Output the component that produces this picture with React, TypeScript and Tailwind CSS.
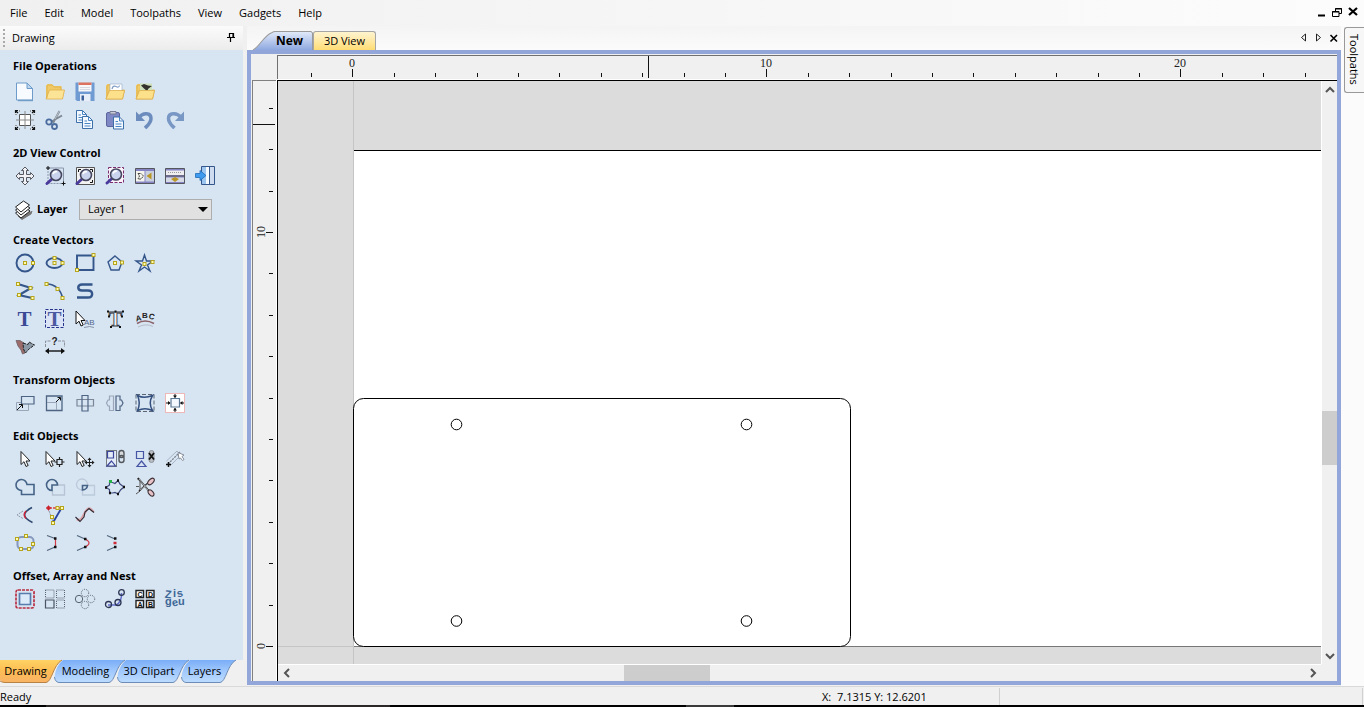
import type { ReactNode } from "react";

const navy = "#34568b";
const cursor = "M0 0V13L3 10.2L5 15L7.2 14L5 9.5H9Z";

function Node({ x, y }: { x: number; y: number }) {
  return <rect x={x - 1.5} y={y - 1.5} width="3" height="3" fill="#fffbb0" stroke="#b5a41c" strokeWidth="1" />;
}

function Lens({ x, y }: { x: number; y: number }) {
  return (
    <g>
      <path d={`M${x - 4} ${y + 4}L${x - 9} ${y + 8.5}`} stroke="#4a3a9c" strokeWidth="3" strokeLinecap="round" />
      <circle cx={x} cy={y} r="5.5" fill="#c9d3ee" stroke="#45475e" strokeWidth="1.6" />
      <path d={`M${x - 3} ${y - 1}A3.4 3.4 0 0 1 ${x + 1} ${y - 3.2}`} stroke="#fff" strokeWidth="1.6" fill="none" />
    </g>
  );
}

function Folder() {
  return (
    <g>
      <path d="M2 18V4.5L3.5 3H8L10 5H17.5V9H20.5L18.5 18Z" fill="#f0ca66" />
      <path d="M2 18L5.5 9H20.5L18.5 18Z" fill="#fce497" stroke="#e0b04c" strokeWidth=".8" />
      <path d="M3 17V5L4 4H8L10 6H17V9" fill="none" stroke="#dcae4a" strokeWidth=".8" />
    </g>
  );
}

function SmallDoc({ x, y }: { x: number; y: number }) {
  return (
    <g transform={`translate(${x} ${y})`}>
      <path d="M.5 .5H6.5L10.5 4.5V12.5H.5Z" fill="#f4f9ff" stroke="#3d6fa8" />
      <path d="M6.5 .5V4.5H10.5M2.5 5H5M2.5 7.5H8.5M2.5 10H8.5" fill="none" stroke="#4a86c5" />
    </g>
  );
}

type Tool = { name: string; art: ReactNode };

const fileTools: Tool[][] = [
  [
    { name: "New", art: <><path d="M2.5 2H13L18.5 7.5V19H2.5Z" fill="#f7fbff" stroke="#6d9cca" /><path d="M13 2V7.500H18.500Z" fill="#bcd7ee" stroke="#6d9cca" /><path d="M4 19.500H19" stroke="#6f9cc8" strokeWidth="1.400" /></> },
    { name: "Open", art: <Folder /> },
    { name: "Save", art: <><path d="M1.500 1.500H20.500V20H3L1.500 18.500Z" fill="#6f9ad2" /><path d="M4.500 1.500H17.500V10.500H4.500Z" fill="#f8f8fb" /><path d="M4.500 1.500H17.500V4H4.500Z" fill="#dd7260" /><path d="M6 6.500H16M6 8.500H16" stroke="#d5d9e2" /><path d="M6 13H16.500V20H6Z" fill="#e8eef7" /><path d="M7.500 14.500H10V19.500H7.500Z" fill="#3c5f99" /></> },
    { name: "Import vectors", art: <><Folder /><path d="M6 3H18V10L14 12H6Z" fill="#fff" stroke="#9fb2cc" strokeWidth=".7" /><path d="M8 8Q9 4 12 5.500Q15 7 15.500 4.500" fill="none" stroke="#7f9cc6" strokeWidth="1.200" /><path d="M2 18L5.500 9.500H20.500L18.500 18Z" fill="#fce08a" stroke="#e0b04c" strokeWidth=".8" /></> },
    { name: "Import bitmap", art: <><Folder /><path d="M6 2.500H18V10H6Z" fill="#cfe0bd" /><path d="M7 4.500L10 3L14 4.500L18 5L14.500 7.500L13 10L10 7.500Z" fill="#33322f" /><path d="M2 18L5.500 9.500H20.500L18.500 18Z" fill="#fce08a" stroke="#e0b04c" strokeWidth=".8" /></> },
  ],
  [
    { name: "Job setup", art: <><path d="M5.500 5.500H16.500V16.500H5.500Z" fill="#fff" stroke="#555" /><path d="M11 2V20M2 11H20" stroke="#888" /><path d="M3 5.500H1M3 16.500H1M19 5.500H21M19 16.500H21M5.500 3V1M16.500 3V1M5.500 19V21M16.500 19V21" stroke="#999" /><path d="M1.500 4V1.500H4M18 1.500H20.500V4M20.500 18V20.500H18M4 20.500H1.500V18M1.500 1.500L4 4M20.500 1.500L18 4M20.500 20.500L18 18M1.500 20.500L4 18" fill="none" stroke="#111" strokeWidth="1.200" /></> },
    { name: "Cut", art: <><path d="M15.500 2L9 14M18 6.500L7.500 12.500" stroke="#7e8893" strokeWidth="2" /><path d="M15.500 2L11 10" stroke="#b9c2ca" strokeWidth="1" /><circle cx="5" cy="13" r="2.700" fill="none" stroke="#4a6c9e" strokeWidth="1.800" /><circle cx="10.500" cy="17.500" r="2.500" fill="none" stroke="#4a6c9e" strokeWidth="1.800" /></> },
    { name: "Copy", art: <><SmallDoc x={2} y={1} /><SmallDoc x={8} y={7} /></> },
    { name: "Paste", art: <><rect x="2.500" y="3.500" width="13" height="14" rx="1.500" fill="#7e88c4" stroke="#5d659e" /><path d="M6 5V2.500H12V5Z" fill="#c9ccd8" stroke="#767b93" /><SmallDoc x={9} y={7.500} /></> },
    { name: "Undo", art: <><path d="M5 8.500C9 3 17 3.500 17 9.500C17 14 13.500 16.500 11 19" fill="none" stroke="#6b8cbd" strokeWidth="3.500" /><path d="M2 2.500V12H11Z" fill="#6b8cbd" /></> },
    { name: "Redo", art: <><path d="M17 8.500C13 3 4.500 3.500 4.500 9.500C4.500 14 8 16.500 10.500 19" fill="none" stroke="#7897c4" strokeWidth="3.500" /><path d="M20 2.500V12H11Z" fill="#7897c4" /></> },
  ],
];

const viewTools: Tool[][] = [
  [
    { name: "Pan", art: <><path d="M11 2L14.500 5.500H12.500V9.500H16.500V7.500L20 11L16.500 14.500V12.500H12.500V16.500H14.500L11 20L7.500 16.500H9.500V12.500H5.500V14.500L2 11L5.500 7.500V9.500H9.500V5.500H7.500Z" fill="#f0f2f6" stroke="#56595f" /></> },
    { name: "Zoom box", art: <><path d="M4 3H19.500V18.500" fill="none" stroke="#8a97ab" /><path d="M4 3V18.500H19.500" fill="none" stroke="#8a97ab" strokeDasharray="2 1" /><path d="M2 3H6M4 1V5M17.500 18.500H21.500M19.500 16.500V20.500" stroke="#111" /><Lens x={12} y={10} /></> },
    { name: "Zoom extents", art: <><path d="M2.500 2.500H20.500V19.500H2.500Z" fill="#f3f3f4" stroke="#555" /><path d="M4.500 7V4.500H7M16 4.500H18.500V7M18.500 15V17.500H16" fill="none" stroke="#111" /><Lens x={12} y={10} /></> },
    { name: "Zoom selection", art: <><rect x="4.500" y="2.500" width="15" height="15" fill="#fdf3fb" stroke="#7b2d6e" strokeDasharray="3 1.500" /><Lens x={12} y={9.500} /></> },
    { name: "Tile vertically", art: <><path d="M1.500 3.500H20.500V18.500H1.500Z" fill="#8683c4" stroke="#55575f" /><path d="M2 6H10.500V16.500H2Z" fill="#f5f5ee" /><path d="M11.500 6H20V16.500H11.500Z" fill="#c8d0df" /><path d="M4 8.500H7L9.500 11L7 14H4L5.500 11Z" fill="none" stroke="#444" strokeDasharray="2 .6" /><path d="M12.500 11L17.500 7.500V14.500Z" fill="#ba9627" /></> },
    { name: "Tile horizontally", art: <><path d="M1.500 3.500H20.500V18.500H1.500Z" fill="#8683c4" stroke="#55575f" /><path d="M2 5.500H20V10H2Z" fill="#eeeef0" /><path d="M2 12.500H20V17H2Z" fill="#d7dbe6" /><path d="M1.500 11H20.500" stroke="#555" /><path d="M4 7.500H18" stroke="#999" strokeDasharray="1 1" /><path d="M7 14L11 12L15 14L11 17Z" fill="#ba9627" /></> },
    { name: "Toggle panel", art: <><path d="M7.500 1.500H20.500V19.500H7.500Z" fill="#f5faff" stroke="#34568b" /><path d="M8 2H12V19H8Z" fill="#9cc6f0" /><path d="M16 2H20V19H16Z" fill="#cfdcf0" /><path d="M15.500 2V19" stroke="#34568b" /><path d="M1.500 8.500H6V5.500L12 10.500L6 15.500V12.500H1.500Z" fill="#3f9bf0" stroke="#1f6bb8" strokeWidth=".8" /></> },
  ],
];

const createTools: Tool[][] = [
  [
    { name: "Draw circle", art: <><circle cx="11" cy="11" r="8.500" fill="none" stroke={navy} strokeWidth="1.900" /><Node x={11} y={11} /><Node x={19} y={11} /></> },
    { name: "Draw ellipse", art: <><ellipse cx="10.500" cy="11" rx="8" ry="5" fill="none" stroke={navy} strokeWidth="1.900" /><Node x={10.500} y={6} /><Node x={10.500} y={11} /><Node x={18.500} y={11} /></> },
    { name: "Draw rectangle", art: <><path d="M3 3.500H19.500V18H3Z" fill="none" stroke={navy} strokeWidth="1.900" /><Node x={19.500} y={3} /><Node x={3} y={18} /></> },
    { name: "Draw polygon", art: <><path d="M11 4L18 10L15 18H7L4 10Z" fill="none" stroke={navy} strokeWidth="1.400" /><Node x={11} y={11} /><Node x={18} y={10.500} /></> },
    { name: "Draw star", art: <><path d="M10.500 3L12.500 9H19L13.500 13L16 19L10.500 15L5 19L7.500 13L2 9H8.500Z" fill="none" stroke={navy} strokeWidth="1.400" /><Node x={10.500} y={12} /><Node x={18.500} y={10} /></> },
  ],
  [
    { name: "Draw polyline", art: <><path d="M4 4L17 8L5 15L18 18" fill="none" stroke={navy} strokeWidth="2.200" /><Node x={4} y={4} /><Node x={16.500} y={8} /><Node x={5} y={15} /><Node x={18.500} y={18} /></> },
    { name: "Draw arc", art: <><path d="M3 4C11 4 17 10 18.500 18" fill="none" stroke={navy} strokeWidth="1.600" /><Node x={2.500} y={4} /><Node x={13.500} y={9} /><Node x={18.500} y={18} /></> },
    { name: "Draw curve", art: <path d="M18.500 4.500H8C3 4.500 3 10.500 8 10.500H14C19.500 10.500 19.500 17.500 14 17.500H3" fill="none" stroke={navy} strokeWidth="2.400" /> },
  ],
  [
    { name: "Draw text", art: <text x="10.500" y="17.500" textAnchor="middle" className="font-['Liberation_Serif',serif] text-[21px] font-bold" fill="#3a4a94">T</text> },
    { name: "Draw auto text", art: <><rect x="1.500" y="1.500" width="18" height="18" fill="#dbe3f6" stroke="#27348b" strokeDasharray="3 1.500" /><text x="10.500" y="17.500" textAnchor="middle" className="font-['Liberation_Serif',serif] text-[21px] font-bold" fill="#4b5aa0">T</text></> },
    { name: "Edit text", art: <><path d={cursor} transform="translate(2 3)" fill="#fff" stroke="#111" /><text x="10" y="17" className="font-['Liberation_Sans',sans-serif] text-[8px]" fill="#52678c">AB</text><path d="M10 19.500Q16 17.500 20 19.500" stroke="#8794aa" fill="none" /></> },
    { name: "Convert text", art: <><text x="11.500" y="17.500" textAnchor="middle" className="font-['Liberation_Serif',serif] text-[20px] font-bold" fill="#eef2f8" stroke="#3a3f47" strokeWidth=".9">T</text><path d="M3 3.500H5M10.500 3.500H12.500M18 3.500H20M4 8.500H6M17 8.500H19M6 19H8M15 19H17" stroke="#111" strokeWidth="2" /></> },
    { name: "Text on curve", art: <><g className="font-['Liberation_Sans',sans-serif] text-[8px] font-bold" fill="#222"><text x="2" y="13" transform="rotate(-12 4 12)">A</text><text x="8" y="10">B</text><text x="14" y="11" transform="rotate(14 16 12)">C</text></g><path d="M3 15.500Q11 10.500 20 15.500" fill="none" stroke="#8a6268" strokeWidth="1.500" /><path d="M4 19Q12 15 19 18.500" fill="none" stroke="#b7bfca" /></> },
  ],
  [
    { name: "Trace bitmap", art: <><path d="M2 4.500L6 4.500L10 7L9.500 12L11 17L8.500 18L7 14L4 10Z" fill="#9c6c6c" stroke="#6d6064" strokeWidth=".8" /><path d="M9 7L14 8.500L15 6L20.500 9L15 13L11.500 17L9.500 13Z" fill="#8b98a5" stroke="#222" strokeDasharray="3 1" /></> },
    { name: "Measure", art: <><path d="M1.500 11V5H7M14 5H20.500V11" fill="none" stroke="#8b929c" strokeDasharray="3 1" /><text x="10.500" y="9" textAnchor="middle" className="font-['Liberation_Sans',sans-serif] text-[10px] font-bold" fill="#222">?</text><path d="M2 15H20" stroke="#111" strokeWidth="1.400" /><path d="M1 15L5 12V18ZM21 15L17 12V18Z" fill="#111" /></> },
  ],
];

const transformTools: Tool[][] = [
  [
    { name: "Move", art: <><path d="M2.500 10.500H14.500V18.500H2.500Z" fill="none" stroke="#9aa7b8" /><path d="M7.500 4.500H20V12H7.500Z" fill="#d7e4f2" stroke="#4d6482" strokeWidth="1.200" /><path d="M3 18L8 13M5 12.500H8.500V16" fill="none" stroke="#111" /></> },
    { name: "Scale", art: <><path d="M2.500 4H18V18.500H2.500Z" fill="none" stroke="#4d6482" strokeWidth="1.300" /><path d="M3 10.500H12.500V18" fill="none" stroke="#9aa7b8" /><path d="M12 10L16 6M13.500 5.500H16.500V8.500" fill="none" stroke="#111" /></> },
    { name: "Rotate", art: <><path d="M3 7.500H19.500V14H3Z" fill="none" stroke="#7b8797" strokeWidth="1.200" /><path d="M8 3.500H14V19H8Z" fill="none" stroke="#4d6482" strokeWidth="1.200" /></> },
    { name: "Mirror", art: <><path d="M9.500 4V18.500H5.500V14H4L2.500 11L4 8H5.500V4Z" fill="none" stroke="#9aa7b8" strokeWidth="1.200" /><path d="M12 4V18.500H16V14H17.500L19 11L17.500 8H16V4Z" fill="none" stroke="#4d6482" strokeWidth="1.200" /></> },
    { name: "Distort", art: <><path d="M2 2.500H20V19.500H2Z" fill="none" stroke="#5a6675" strokeDasharray="4 2" /><path d="M3.500 3.500Q10 7 18.500 3.500Q14 11 18.500 18.500Q11 15 3.500 18.500Q7 11 3.500 3.500Z" fill="#d7e4f2" stroke="#34507f" strokeWidth="1.500" /></> },
    { name: "Align", art: <><rect x="1.500" y="1.500" width="19" height="19" fill="#fff" stroke="#efb8b8" /><path d="M7 6.500H15.500V15H7Z" fill="#f3f8ff" stroke="#5b7896" strokeWidth="1.200" /><path d="M2 11H6M16.500 11H20M11 2V5.500M11 16V20" stroke="#111" /><path d="M4 9L6.500 11L4 13ZM18.500 9L16 11L18.500 13ZM9 3.500L11 6L13 3.500ZM9 18.500L11 16L13 18.500Z" fill="#111" /></> },
  ],
];

const editTools: Tool[][] = [
  [
    { name: "Select", art: <path d={cursor} transform="translate(7 3.500)" fill="#fff" stroke="#222" /> },
    { name: "Node edit", art: <><path d={cursor} transform="translate(2 3.500)" fill="#fff" stroke="#222" /><path d="M13 11.500H18V16.500H13ZM15.500 9V11.500M15.500 16.500V19M10.500 14H13M18 14H20.500" fill="none" stroke="#222" strokeWidth="1.200" /></> },
    { name: "Interactive move", art: <><path d={cursor} transform="translate(3 3.500)" fill="#fff" stroke="#222" /><path d="M15.500 10V19M11 14.500H20" stroke="#222" /><path d="M13.500 12L15.500 9.500L17.500 12ZM13.500 17L15.500 19.500L17.500 17ZM13 12.500L10.500 14.500L13 16.500ZM18 12.500L20.500 14.500L18 16.500Z" fill="#222" /></> },
    { name: "Group", art: <><path d="M2.500 2.500H12.500V18.500H2.500Z" fill="#e4ecf7" stroke="#111" strokeDasharray="1 1" /><path d="M3.500 3.500H9.500V10H3.500ZM7.500 13L11.500 18H3Z" fill="none" stroke="#3d489c" strokeWidth="1.200" /><rect x="15" y="2.500" width="5" height="7" rx="2.500" fill="#d7dadd" stroke="#55585c" strokeWidth="1.400" /><rect x="15" y="7.500" width="5" height="7" rx="2.500" fill="none" stroke="#55585c" strokeWidth="1.400" /></> },
    { name: "Ungroup", art: <><path d="M2.500 3.500H9.500V10.500H2.500ZM7.500 13L12 18.500H3Z" fill="none" stroke="#4655a4" strokeWidth="1.200" /><rect x="15" y="2.500" width="5" height="12" rx="2.500" fill="#b8bdc3" stroke="#8d9298" /><path d="M15 5L20 11.500M20 5L15 11.500" stroke="#111" strokeWidth="1.800" /></> },
    { name: "Snap", art: <><path d="M4 16L16 4" stroke="#777f89" strokeDasharray="2 1" strokeWidth="1.300" /><path d="M2.500 13L13 3L15 5M6 18L17 7" stroke="#9ba6b5" strokeWidth=".8" /><path d="M2 16.500H7M4.500 14V19" stroke="#111" strokeWidth="1.500" /><path d="M14 4.500L20 7L18 8.500L20 11.500L18.500 12.500L16.500 10L15 11Z" fill="#fff" stroke="#858e9c" /></> },
  ],
  [
    { name: "Weld", art: <path d="M7.500 14.500A5.500 5.500 0 1 1 13 8.500H20V18.500H7.500Z" fill="none" stroke="#456386" strokeWidth="1.600" /> },
    { name: "Subtract", art: <><path d="M14 9H20.500V19H8.500V15" fill="none" stroke="#b6c4d4" strokeWidth="1.300" /><path d="M8 14.500A5.500 5.500 0 1 1 13.500 9H8Z" fill="none" stroke="#456386" strokeWidth="1.600" /></> },
    { name: "Intersect", art: <><circle cx="8" cy="8.500" r="5.500" fill="none" stroke="#bccada" strokeWidth="1.300" /><path d="M14 9.500H20.500V19H8.500V15" fill="none" stroke="#bccada" strokeWidth="1.300" /><path d="M8.500 14V9.500H13.500Q13 13.500 8.500 14Z" fill="none" stroke="#456386" strokeWidth="1.600" /></> },
    { name: "Trim nodes", art: <><path d="M2 11.500L5.500 9V6.500H8.500L11 7.500L14 4.500L16 8L20 11L16.500 14L14 18L11 16.500L8.500 17L5.500 17V13.500Z" fill="#d7e4f2" stroke="#3e497b" strokeWidth="1.200" /><path d="M5 5.500H8" stroke="#26b345" strokeWidth="3" /><path d="M1 11.500H3M13 4.500H15M19 11H21M13 18H15M5 17H7" stroke="#111" strokeWidth="2.500" /></> },
    { name: "Scissors", art: <><path d="M3 2.500L6 5V15L2 18M2 10.500H5" fill="none" stroke="#555" /><path d="M4 2L15 15M5 15L14 7" stroke="#222" strokeWidth="1.600" /><path d="M5 3L14 14M6 14L14 8" stroke="#d9dde2" strokeWidth=".7" /><ellipse cx="17" cy="5.500" rx="4" ry="2.200" transform="rotate(-45 17 5.500)" fill="#e7c2c8" stroke="#3b2f33" strokeWidth="1.100" /><ellipse cx="17" cy="17" rx="3.600" ry="2.200" transform="rotate(50 17 17)" fill="#e7c2c8" stroke="#3b2f33" strokeWidth="1.100" /></> },
  ],
  [
    { name: "Fillet", art: <><path d="M18 3.500Q3 11 18.500 18.500" fill="none" stroke="#2f4a70" strokeWidth="1.600" /><path d="M9 7L3 11L9 14.500" fill="none" stroke="#8e98a5" strokeDasharray="2 1" /><path d="M12 7Q8.500 11 12 14.500" fill="none" stroke="#cc2439" strokeWidth="1.400" /></> },
    { name: "Extend", art: <><path d="M5 4H16" stroke="#df4048" strokeWidth="1.300" strokeDasharray="3 1" /><path d="M17.500 4L9 18.500" stroke="#2743a0" strokeWidth="1.800" /><path d="M4 4L9 18" stroke="#8a93a5" strokeDasharray="2 1" /><circle cx="4.500" cy="4" r="2" fill="#d8303c" /><path d="M2 4H7M4.500 1.500V6.500" stroke="#c4202b" /><Node x={13.500} y={4} /><Node x={18} y={4} /><Node x={8} y={13} /><Node x={9} y={19} /></> },
    { name: "Join curve", art: <><path d="M3 15C9 20 10 4.500 15 4.500C18 4.500 18 8 20 7" fill="none" stroke="#dba0a6" strokeWidth="2.400" /><path d="M1.500 13L6 17.500L10 13L11 8L15 4.500L20 8.500" fill="none" stroke="#2b2b34" strokeWidth="1.100" /></> },
  ],
  [
    { name: "Fit curve", art: <><rect x="3.500" y="5" width="16" height="12" rx="4" fill="none" stroke="#8798bd" strokeWidth="2" /><Node x={12} y={4} /><Node x={3} y={7} /><Node x={19} y={12} /><Node x={7} y={17} /><Node x={15} y={17} /></> },
    { name: "Join with line", art: <><path d="M3 3.500L11 6.500M3 18.500L11 15" stroke="#52677e" strokeWidth="1.200" /><path d="M11.500 7V15" stroke="#cf3c48" strokeWidth="1.200" /><path d="M10 6.500H12.500M10 15H12.500" stroke="#111" strokeWidth="2.500" /></> },
    { name: "Join with curve", art: <><path d="M3 3.500L11 7M3 18.500L11 15" stroke="#52677e" strokeWidth="1.200" /><path d="M11 7Q19 11 11 15" fill="none" stroke="#cf3c48" strokeWidth="1.200" /><path d="M10 7H12.500M10 15H12.500" stroke="#111" strokeWidth="2.500" /></> },
    { name: "Join by moving ends", art: <><path d="M3 3.500L11 7M3 18.500L11 15" stroke="#52677e" strokeWidth="1.200" /><path d="M10 6.500H12.500M10 15H12.500" stroke="#111" strokeWidth="2.500" /><path d="M9.500 11H12.500" stroke="#cf2c38" strokeWidth="2.500" /></> },
  ],
];

const offsetTools: Tool[][] = [
  [
    { name: "Offset", art: <><rect x="2" y="2" width="18" height="18" rx="2" fill="none" stroke="#b92e42" strokeWidth="1.700" strokeDasharray="3 1" /><path d="M5.500 5.500H16.500V16.500H5.500Z" fill="#dcebfa" stroke="#587cab" strokeWidth="1.700" /></> },
    { name: "Linear array", art: <><path d="M1.500 2H10V10H1.500ZM12.500 2H20.500V10H12.500ZM12.500 12H20.500V20H12.500Z" fill="none" stroke="#596271" strokeDasharray="1 1" /><path d="M1.500 12H10V20H1.500Z" fill="none" stroke="#4a5563" strokeWidth="1.200" /></> },
    { name: "Circular array", art: <><circle cx="5" cy="11" r="3.700" fill="none" stroke="#56616f" /><g fill="none" stroke="#56616f" strokeDasharray="1 1"><circle cx="11" cy="5" r="3.700" /><circle cx="17" cy="11" r="3.700" /><circle cx="11" cy="17" r="3.700" /></g></> },
    { name: "Copy along vectors", art: <><path d="M4 17H12Q18 14 17.500 5" fill="none" stroke="#626dca" strokeWidth="1.500" /><g fill="none" stroke="#2c3553" strokeWidth="1.300"><circle cx="4.500" cy="16.500" r="3" /><circle cx="14" cy="14.500" r="3" /><circle cx="17.500" cy="4.500" r="2.800" /></g></> },
    { name: "Plate production", art: <><path d="M2 2.500H9.500V9.500H2ZM12.500 2.500H20V9.500H12.500ZM2 12.500H9.500V19.500H2ZM12.500 12.500H20V19.500H12.500Z" fill="#fff" stroke="#222" strokeWidth="1.400" /><g className="font-['Liberation_Sans',sans-serif] text-[7px] font-bold" fill="#111" textAnchor="middle"><text x="6" y="8.500">C</text><text x="16.500" y="8.500">D</text><text x="6" y="18.500">A</text><text x="16.500" y="18.500">B</text></g></> },
    { name: "Nest", art: <g className="font-['Liberation_Sans',sans-serif] text-[11px] font-bold" fill="#3d6796"><text x="1" y="10" transform="rotate(6 4 6)">Z</text><text x="9" y="9">i</text><text x="13" y="9" transform="rotate(-12 16 7)">s</text><text x="1" y="17">g</text><text x="8" y="18" transform="rotate(-14 11 15)">e</text><text x="14" y="17">u</text></g> },
  ],
];

function Section({ title, rows, first }: { title: string; rows: Tool[][]; first?: boolean }) {
  return (
    <section className="mb-[10px]">
      <h2 className={`pl-[3px] text-[11px] leading-[18px] font-bold ${first ? "mb-[3px]" : ""}`}>{title}</h2>
      {rows.map((row, i) => (
        <div key={i} className="flex">
          {row.map((tool) => (
            <button key={tool.name} aria-label={tool.name} className="flex h-7 w-[30px] items-center justify-center">
              <svg viewBox="0 0 22 22" className="h-[22px] w-[22px] overflow-visible" fill="none">{tool.art}</svg>
            </button>
          ))}
        </div>
      ))}
    </section>
  );
}

function PanelTab({ label, width, active, className }: { label: string; width: number; active?: boolean; className: string }) {
  const id = active ? "tab-on" : "tab-off";
  return (
    <button className={`relative h-6 shrink-0 pb-[2px] ${className}`}>
      <svg className="absolute top-0 left-0 h-6 overflow-visible" width={width} fill="none" aria-hidden="true">
        <defs>
          <linearGradient id={id} x1="0" y1="0" x2="0" y2="1">
            <stop offset="0" stopColor={active ? "#ffd363" : "#79adf7"} />
            <stop offset=".48" stopColor={active ? "#fdbd54" : "#a0c8fd"} />
            <stop offset="1" stopColor={active ? "#f9b366" : "#bddcff"} />
          </linearGradient>
        </defs>
        <path
          d={`M9 0C3 5 1 12 .5 17Q1 22 5 22.500H${width - 8}C${width - 2} 22 ${width - 1} 5 ${width + 8} 0Z`}
          fill={`url(#${id})`}
        />
        {active && <path d="M0 0H12V22.500H3L0 20Z" fill={`url(#${id})`} />}
        <path
          d={`M${active ? 0 : 0.5} ${active ? 21 : 17}Q1 22 5 22.500H${width - 8}C${width - 2} 22 ${width - 1} 5 ${width + 8} 0`}
          stroke={active ? "#b78243" : "#6d8db8"}
        />
      </svg>
      <span className="relative">{label}</span>
    </button>
  );
}

const STEP = 41.4;
const ticks = Array.from({ length: 50 }, (_, i) => i - 1);

function TopRuler() {
  return (
    <svg className="h-[23px] w-full" aria-label="Horizontal ruler" shapeRendering="crispEdges">
      {ticks.map((n) => {
        const x = 74 + Math.ceil(n * STEP - 0.01) + 0.5;
        return <path key={n} d={`M${x} ${n % 10 === 0 ? 13 : 17}V21`} stroke="#111" />;
      })}
      {[0, 10, 20].map((n) => (
        <text key={n} x={74 + n * STEP} y="11" textAnchor="middle" className="font-['Liberation_Serif',serif] text-[12px]" fill="#222">{n}</text>
      ))}
      <path d="M370.500 0V22" stroke="#111" />
    </svg>
  );
}

function SideRuler() {
  return (
    <svg className="h-full w-full" aria-label="Vertical ruler" shapeRendering="crispEdges">
      {ticks.map((n) => {
        const y = Math.round(565 - n * STEP) + 0.5;
        if (y < 0) return null;
        return <path key={n} d={`M${n % 10 === 0 ? 13 : 16} ${y}H20`} stroke="#111" />;
      })}
      {[0, 10].map((n) => (
        <text key={n} transform={`translate(12 ${565 - n * STEP}) rotate(-90)`} textAnchor="middle" className="font-['Liberation_Serif',serif] text-[12px]" fill="#222">{n}</text>
      ))}
      <path d="M0 43.500H22" stroke="#111" />
    </svg>
  );
}

function Arrow({ d, label, className }: { d: string; label: string; className: string }) {
  return (
    <button aria-label={label} className={`flex shrink-0 items-center justify-center ${className}`}>
      <svg viewBox="0 0 10 10" className="h-[10px] w-[10px]" fill="none" stroke="#555" strokeWidth="2"><path d={d} /></svg>
    </button>
  );
}

export default function App() {
  return (
    <div className="flex h-screen flex-col overflow-hidden bg-[#f0f0f0] font-['Open_Sans','Noto_Sans',sans-serif] text-[11px] text-black">
      <header className="flex h-[26px] shrink-0 items-center justify-between bg-gradient-to-r from-[#f0f0f0] to-[#fcfcfc] pr-[5px] pl-[10px]">
        <nav className="flex gap-[17px]">
          {["File", "Edit", "Model", "Toolpaths", "View", "Gadgets", "Help"].map((m) => <button key={m}>{m}</button>)}
        </nav>
        <div className="flex items-center gap-[4px] pb-[2px]">
          <button aria-label="Minimize"><svg className="h-3 w-3" viewBox="0 0 12 12"><path d="M3 9.500H10" stroke="#000" strokeWidth="2" /></svg></button>
          <button aria-label="Restore"><svg className="h-3 w-3" viewBox="0 0 12 12" fill="none" stroke="#000"><path d="M4.500 5V2.500H10.500V7.500H8M4 3H11M1.500 5.500H8V10.500H1.500ZM1 6H8" /></svg></button>
          <button aria-label="Close"><svg className="h-3 w-3" viewBox="0 0 12 12"><path d="M2 2L10 9M10 2L2 9" stroke="#000" strokeWidth="2.200" /></svg></button>
        </div>
      </header>

      <div className="flex min-h-0 flex-1">
        <aside className="flex w-[243px] shrink-0 flex-col">
          <div className="flex h-6 shrink-0 items-center bg-gradient-to-b from-[#fbfbfb] to-[#ececec] pr-[6px] pl-[3px]">
            <div className="h-[18px] w-[9px] border-l-2 border-dotted border-[#aaa]" />
            <span className="flex-1">Drawing</span>
            <button aria-label="Pin panel" className="pb-[3px]"><svg className="h-3 w-3" viewBox="0 0 12 12" fill="none" stroke="#000"><path d="M4.500 6.500V2.500H8.500V6.500M2 6.500H10M5.500 7V11M8 2.500V6" strokeWidth="1.200" /></svg></button>
          </div>
          <div className="min-h-0 flex-1 bg-[#d7e4f2] pt-[7px] pl-[10px]">
            <Section title="File Operations" rows={fileTools} first />
            <Section title="2D View Control" rows={viewTools} />
            <div className="mb-[12px] flex h-[19px] items-center">
              <svg className="ml-[3px] h-[22px] w-[22px]" viewBox="0 0 22 22" fill="#fff" stroke="#222">
                <path d="M5 17L9 20.500L18 15L19 12" fill="#777" stroke="#777" />
                <path d="M2.500 14L11 8L17 12L8 19Z" /><path d="M2.500 11L11 5L17 9L8 16Z" /><path d="M2.500 8L10.500 2L16.500 6L8 13Z" />
              </svg>
              <label htmlFor="layer" className="ml-[2px] w-[42px] text-[11px] font-bold">Layer</label>
              <div className="relative">
                <select id="layer" className="block h-[21px] w-[133px] appearance-none border border-[#adadad] bg-[#e1e1e1] pl-2">
                  <option>Layer 1</option>
                </select>
                <svg className="pointer-events-none absolute top-2 right-1 h-[5px] w-[10px]" viewBox="0 0 10 5"><path d="M0 0H10L5 5Z" /></svg>
              </div>
            </div>
            <Section title="Create Vectors" rows={createTools} />
            <Section title="Transform Objects" rows={transformTools} />
            <Section title="Edit Objects" rows={editTools} />
            <Section title="Offset, Array and Nest" rows={offsetTools} />
          </div>
          <div className="flex h-[26px] shrink-0">
            <PanelTab label="Drawing" width={54} active className="z-30 w-[54px] pr-[3px]" />
            <PanelTab label="Modeling" width={63} className="z-20 w-[63px]" />
            <PanelTab label="3D Clipart" width={64} className="z-10 w-[64px]" />
            <PanelTab label="Layers" width={47} className="w-[47px]" />
          </div>
        </aside>

        <main className="ml-1 flex min-w-0 flex-1 flex-col">
          <div className="flex h-6 shrink-0 items-end bg-gradient-to-b from-[#f4f4f4] to-[#fbfbfb]">
            <button className="relative z-10 ml-1 h-[19px] w-[62px] pl-[15px] text-[12px] leading-[19px] font-bold">
              <svg className="absolute top-0 left-0 h-[19px] w-[62px]" viewBox="0 0 61 20" preserveAspectRatio="none" aria-hidden="true">
                <defs><linearGradient id="view-tab" x1="0" y1="0" x2="0" y2="1"><stop offset="0" stopColor="#e3ebfa" /><stop offset="1" stopColor="#8ea8e0" /></linearGradient></defs>
                <path d="M2 20C9 16 13 4 21 1.500Q22 .5 24 .5H59L60.500 2V20" fill="url(#view-tab)" stroke="#9a9a9a" />
              </svg>
              <span className="relative">New</span>
            </button>
            <button className="h-[19px] w-[63px] rounded-t-[3px] border border-b-0 border-[#a5a5a5] bg-gradient-to-b from-[#fff4cf] to-[#ffdc72]">3D View</button>
            <div className="mr-0 ml-auto flex h-6 items-center gap-[2px] pb-[1px]">
              <button aria-label="Previous view"><svg className="h-3 w-3" viewBox="0 0 12 12"><path d="M7.500 2V9L3.500 5.500Z" fill="none" stroke="#222" /></svg></button>
              <button aria-label="Next view"><svg className="h-3 w-3" viewBox="0 0 12 12"><path d="M4.500 2V9L8.500 5.500Z" fill="none" stroke="#222" /></svg></button>
              <button aria-label="Close view"><svg className="h-3 w-[15px]" viewBox="0 0 15 12"><path d="M4.500 3L11 9.500M11 3L4.500 9.500" stroke="#000" strokeWidth="1.600" /></svg></button>
            </div>
          </div>

          <div className="mb-[1px] grid min-h-0 flex-1 grid-cols-[26px_minmax(0,1fr)] grid-rows-[26px_minmax(0,1fr)] border-4 border-[#92a6d9]">
            <div className="bg-[#f0f0f0]" />
            <div className="overflow-hidden border-b border-[#fff] pt-[1px] pb-[1px]">
              <div className="h-6 overflow-hidden border-t border-l border-[#707070] bg-[#f0f0f0]"><TopRuler /></div>
            </div>
            <div className="overflow-hidden border-r border-white pl-[1px]">
              <div className="h-full border-t border-l border-[#808080]"><SideRuler /></div>
            </div>
            <div className="grid min-h-0 min-w-0 grid-cols-[minmax(0,1fr)_16px] grid-rows-[minmax(0,1fr)_17px] border-t border-l border-black">
              <svg className="h-full w-full bg-[#dcdcdc]" aria-label="Drawing canvas" fill="none">
                <path d="M75.500 0V590M0 565.500H76" stroke="#c5c5c5" />
                <rect x="76" y="69" width="100%" height="496" fill="#fff" />
                <path d="M76 69.500H4000" stroke="#000" />
                <path d="M76 565.500H4000" stroke="#777" />
                <rect x="75.500" y="317.500" width="497" height="248" rx="10" fill="#fff" stroke="#000" />
                <g stroke="#000"><circle cx="178.500" cy="343.500" r="5.300" /><circle cx="468.500" cy="343.500" r="5.300" /><circle cx="178.500" cy="540" r="5.300" /><circle cx="468.500" cy="540" r="5.300" /></g>
              </svg>
              <div className="flex flex-col border-l border-white bg-[#f0f0f0]">
                <Arrow label="Scroll up" d="M1 7L5 3L9 7" className="h-[18px]" />
                <div className="grow-[313]" />
                <div className="h-[54px] shrink-0 bg-[#cdcdcd]" />
                <div className="grow-[183]" />
                <Arrow label="Scroll down" d="M1 3L5 7L9 3" className="h-[16px]" />
              </div>
              <div className="flex border-t border-white bg-[#f0f0f0]">
                <Arrow label="Scroll left" d="M7 1L3 5L7 9" className="w-[17px]" />
                <div className="grow-[329]" />
                <div className="w-[86px] shrink-0 bg-[#cdcdcd]" />
                <div className="grow-[594]" />
                <Arrow label="Scroll right" d="M3 1L7 5L3 9" className="w-[17px]" />
              </div>
              <div className="bg-[#f0f0f0]" />
            </div>
          </div>
        </main>

        <div className="w-[23px] shrink-0 bg-[#fbfbfb] pt-[1px] pl-[3px]">
          <button className="flex h-[66px] w-5 items-center justify-center rounded-l-[3px] border border-r-0 border-[#999] bg-[#f7f7f7] pr-[2px] pb-[2px] [writing-mode:vertical-rl]">Toolpaths</button>
        </div>
      </div>

      <footer className="shrink-0">
        <div className="flex h-[19px] items-center border-t border-[#d9d9d9] pt-[1px] leading-[18px]">
          <span className="flex-1">Ready</span>
          <span className="w-[177px] whitespace-pre">X:  7.1315 Y: 12.6201</span>
          <span className="mr-[1px] h-[17px] w-[364px] border-x border-[#d0d0d0]" />
        </div>
        <div className="flex h-[2px] bg-black">
          <div className="ml-[46px] w-[344px] bg-[#2c2827]" />
          <div className="ml-[296px] w-12 bg-[#3a3a3a]" />
        </div>
      </footer>
    </div>
  );
}
